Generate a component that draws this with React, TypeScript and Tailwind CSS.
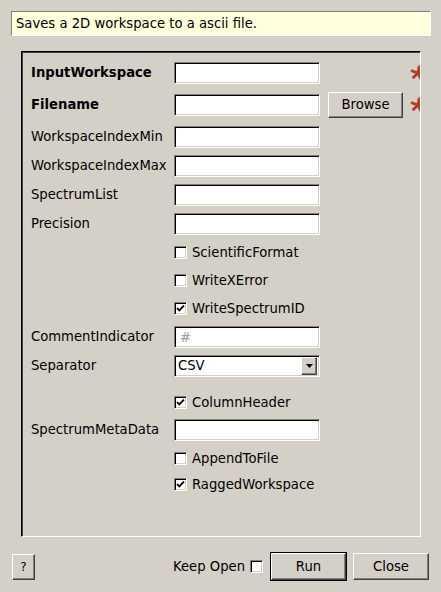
import React from 'react';

type Row =
  | { kind: 'input'; label: string; bold?: boolean; mt: string; browse?: boolean; star?: boolean; placeholder?: string }
  | { kind: 'check'; label: string; checked: boolean; mt: string }
  | { kind: 'combo'; label: string; value: string; mt: string };

const rows: Row[] = [
  { kind: 'input', label: 'InputWorkspace', bold: true, mt: 'mt-0', star: true },
  { kind: 'input', label: 'Filename', bold: true, mt: 'mt-[8px]', browse: true, star: true },
  { kind: 'input', label: 'WorkspaceIndexMin', mt: 'mt-[8px]' },
  { kind: 'input', label: 'WorkspaceIndexMax', mt: 'mt-[7px]' },
  { kind: 'input', label: 'SpectrumList', mt: 'mt-[7px]' },
  { kind: 'input', label: 'Precision', mt: 'mt-[7px]' },
  { kind: 'check', label: 'ScientificFormat', checked: false, mt: 'mt-[7px]' },
  { kind: 'check', label: 'WriteXError', checked: false, mt: 'mt-[6px]' },
  { kind: 'check', label: 'WriteSpectrumID', checked: true, mt: 'mt-[6px]' },
  { kind: 'input', label: 'CommentIndicator', mt: 'mt-[6px]', placeholder: '#' },
  { kind: 'combo', label: 'Separator', value: 'CSV', mt: 'mt-[7px]' },
  { kind: 'check', label: 'ColumnHeader', checked: true, mt: 'mt-[15px]' },
  { kind: 'input', label: 'SpectrumMetaData', mt: 'mt-[5px]' },
  { kind: 'check', label: 'AppendToFile', checked: false, mt: 'mt-[7px]' },
  { kind: 'check', label: 'RaggedWorkspace', checked: true, mt: 'mt-[4px]' },
];

const sunken =
  'border border-t-[#808080] border-l-[#808080] border-r-white border-b-white shadow-[inset_1px_1px_0_#000,inset_-1px_-1px_0_#d4d0c8]';
const raised =
  'border border-t-white border-l-white border-r-[#404040] border-b-[#404040] shadow-[inset_-1px_-1px_0_#808080]';

function CheckBox({ checked }: { checked: boolean }) {
  return (
    <span className={`w-[13px] h-[13px] bg-white flex-shrink-0 flex items-center justify-center ${sunken}`}>
      {checked && (
        <svg width="9" height="9" viewBox="0 0 9 9">
          <path d="M1 4 L3.3 6.4 L8 1.6" fill="none" stroke="#000" strokeWidth="1.8" />
        </svg>
      )}
    </span>
  );
}

function Star() {
  const arms = [-80, -8, 64, 136, 200];
  return (
    <svg width="16" height="16" viewBox="0 0 16 16" className="flex-shrink-0 ml-[7px]">
      {arms.map((a) => {
        const r = (a * Math.PI) / 180;
        return (
          <line
            key={a}
            x1="8"
            y1="8"
            x2={8 + Math.cos(r) * 6.3}
            y2={8 + Math.sin(r) * 6.3}
            stroke="#b33a2c"
            strokeWidth="2.8"
            strokeLinecap="round"
          />
        );
      })}
    </svg>
  );
}

export default function App() {
  return (
    <div
      className="w-[441px] h-[592px] bg-[#d4d0c8] text-black text-[13.2px] overflow-hidden"
      style={{ fontFamily: '"DejaVu Sans", Verdana, sans-serif' }}
    >
      <div className="pt-[11px] pl-[11px]">
        <div className="w-[420px] h-[25px] bg-[#ffffdc] border border-t-[#808080] border-l-[#808080] border-r-white border-b-white flex items-center pl-[4px]">
          Saves a 2D workspace to a ascii file.
        </div>
      </div>

      <div className="ml-[21px] mt-[15px] w-[400px] h-[486px] border border-t-black border-l-black border-r-white border-b-white shadow-[inset_1px_1px_0_#404040] overflow-hidden pt-[10px] pl-[9px]">
        {rows.map((row) => (
          <div
            key={row.label}
            className={`flex items-center ${row.kind === 'input' && row.browse ? 'h-[26px]' : 'h-[22px]'} ${row.mt}`}
          >
            <div className={`w-[143px] flex-shrink-0 whitespace-nowrap ${row.kind !== 'check' && 'bold' in row && row.bold ? 'font-bold' : ''}`}>
              {row.kind !== 'check' ? row.label : ''}
            </div>

            {row.kind === 'input' && (
              <>
                <input
                  readOnly
                  placeholder={row.placeholder}
                  className={`w-[146px] h-[22px] flex-shrink-0 bg-white px-[5px] outline-none placeholder:text-[#a0a0a0] ${sunken}`}
                />
                {(row.browse || row.star) && (
                  <div className="w-[83px] flex-shrink-0 flex justify-end">
                    {row.browse && (
                      <button className={`w-[75px] h-[26px] bg-[#d4d0c8] ${raised}`}>Browse</button>
                    )}
                  </div>
                )}
                {row.star && <Star />}
              </>
            )}

            {row.kind === 'check' && (
              <div className="flex items-center gap-[5px]">
                <CheckBox checked={row.checked} />
                <span>{row.label}</span>
              </div>
            )}

            {row.kind === 'combo' && (
              <div className={`w-[146px] h-[22px] flex-shrink-0 bg-white flex items-center p-[2px] ${sunken}`}>
                <span className="flex-1 pl-[1px]">{row.value}</span>
                <span className={`w-[16px] h-[18px] bg-[#d4d0c8] flex items-center justify-center ${raised}`}>
                  <svg width="7" height="4" viewBox="0 0 7 4">
                    <path d="M0 0 H7 L3.5 4 Z" fill="#000" />
                  </svg>
                </span>
              </div>
            )}
          </div>
        ))}
      </div>

      <div className="mt-[15px] h-[29px] flex items-center pl-[12px] pr-[12px]">
        <button className={`w-[23px] h-[26px] bg-[#d4d0c8] text-[12px] ${raised}`}>?</button>
        <div className="flex-1" />
        <span className="whitespace-nowrap">Keep Open</span>
        <span className="ml-[5px]">
          <CheckBox checked={false} />
        </span>
        <div className="ml-[7px] w-[77px] h-[29px] border border-black flex">
          <button className={`flex-1 bg-[#d4d0c8] ${raised}`}>Run</button>
        </div>
        <button className={`ml-[6px] w-[76px] h-[27px] bg-[#d4d0c8] ${raised}`}>Close</button>
      </div>
    </div>
  );
}
